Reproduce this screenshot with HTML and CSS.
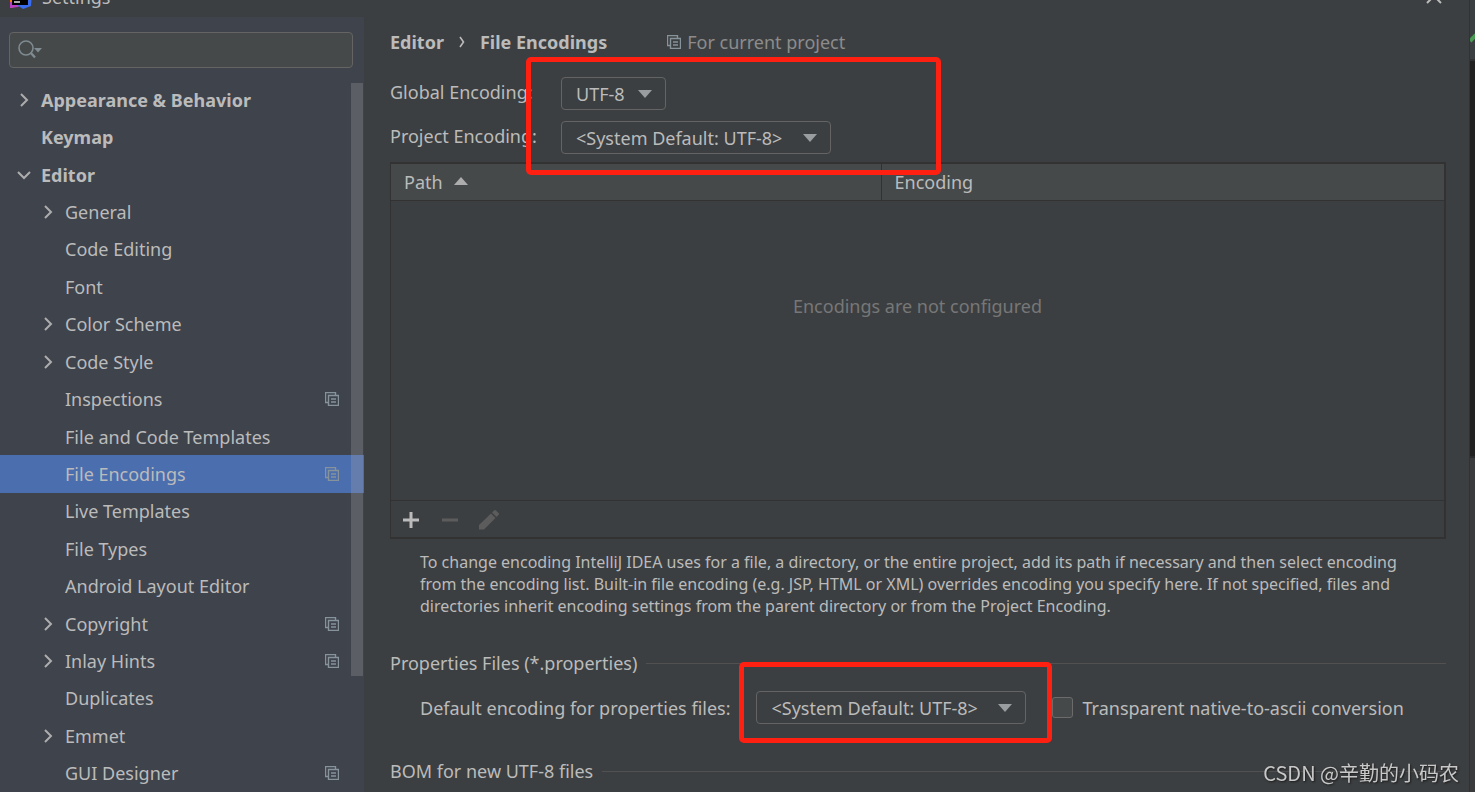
FILE: index.html
```html
<!DOCTYPE html>
<html lang="en">
<head>
    <meta charset="UTF-8">
    <meta name="viewport" content="width=device-width, initial-scale=1.0">
    <title>Settings</title>
    <link rel="stylesheet" href="styles.css">
</head>
<body>
    <!-- shared icons -->
    <svg class="sprite" aria-hidden="true">
        <symbol id="icon-right" viewBox="0 0 14 14"><path d="M4 1 L10 7 L4 13" fill="none" stroke="currentColor" stroke-width="2"/></symbol>
        <symbol id="icon-down" viewBox="0 0 14 14"><path d="M1 4 L7 10 L13 4" fill="none" stroke="currentColor" stroke-width="2"/></symbol>
        <symbol id="icon-copy" viewBox="0 0 14 14"><path d="M10.5 3 V0.5 H0.5 V10.5 H3" fill="none" stroke="currentColor" stroke-width="1.400"/><path d="M3.500 3.500 H13.500 V13.500 H3.500 Z M6 7 H11 M6 10 H11" fill="none" stroke="currentColor" stroke-width="1.400"/></symbol>
        <symbol id="icon-drop" viewBox="0 0 14 8"><path d="M0 0 H14 L7 8 Z" fill="currentColor"/></symbol>
    </svg>

    <div class="window">
        <header class="titlebar">
            <svg class="logo" width="24" height="24" viewBox="0 0 24 24" aria-hidden="true">
                <path d="M1 3 L9 14 L10 21 L1 23 Z" fill="#f97a12"/>
                <path d="M1 17 L14 18 L9 22 L1 23 Z" fill="#b83fc5"/>
                <path d="M12 1 L23 8 L22 21 L14 24 L8 20 Z" fill="#3a6cf0"/>
                <path d="M3 4 H19 V20 H3 Z" fill="#000"/>
                <path d="M5 16 H11 V18 H5 Z" fill="#aaa"/>
            </svg>
            <span>Settings</span>
            <button class="close" aria-label="Close">
                <svg width="16" height="16" viewBox="0 0 16 16"><path d="M1 1 L15 15 M15 1 L1 15" stroke="currentColor" stroke-width="2"/></svg>
            </button>
        </header>

        <aside class="sidebar">
            <div class="search">
                <svg width="26" height="20" viewBox="0 0 26 20" aria-hidden="true">
                    <circle cx="9" cy="8" r="7" fill="none" stroke="currentColor" stroke-width="1.6"/>
                    <path d="M13.500 12.500 L18 17.500" stroke="currentColor" stroke-width="2.400"/>
                    <path d="M17 8 H25 L21 12.500 Z" fill="currentColor"/>
                </svg>
                <input type="text" aria-label="Search settings">
            </div>
            <ul class="tree">
                <li class="top"><svg class="arrow"><use href="#icon-right"/></svg><a href="#">Appearance &amp; Behavior</a></li>
                <li class="top"><a href="#">Keymap</a></li>
                <li class="top"><svg class="arrow"><use href="#icon-down"/></svg><a href="#">Editor</a></li>
                <li><svg class="arrow"><use href="#icon-right"/></svg><a href="#">General</a></li>
                <li><a href="#">Code Editing</a></li>
                <li><a href="#">Font</a></li>
                <li><svg class="arrow"><use href="#icon-right"/></svg><a href="#">Color Scheme</a></li>
                <li><svg class="arrow"><use href="#icon-right"/></svg><a href="#">Code Style</a></li>
                <li><a href="#">Inspections</a><svg class="copy"><use href="#icon-copy"/></svg></li>
                <li><a href="#">File and Code Templates</a></li>
                <li class="selected"><a href="#">File Encodings</a><svg class="copy"><use href="#icon-copy"/></svg></li>
                <li><a href="#">Live Templates</a></li>
                <li><a href="#">File Types</a></li>
                <li><a href="#">Android Layout Editor</a></li>
                <li><svg class="arrow"><use href="#icon-right"/></svg><a href="#">Copyright</a><svg class="copy"><use href="#icon-copy"/></svg></li>
                <li><svg class="arrow"><use href="#icon-right"/></svg><a href="#">Inlay Hints</a><svg class="copy"><use href="#icon-copy"/></svg></li>
                <li><a href="#">Duplicates</a></li>
                <li><svg class="arrow"><use href="#icon-right"/></svg><a href="#">Emmet</a></li>
                <li><a href="#">GUI Designer</a><svg class="copy"><use href="#icon-copy"/></svg></li>
            </ul>
            <div class="scrollbar"></div>
        </aside>

        <main class="content">
            <div class="breadcrumb">
                <b>Editor</b>
                <svg width="6" height="12" viewBox="0 0 6 12" aria-hidden="true"><path d="M1 1 L4.500 6 L1 11" fill="none" stroke="currentColor" stroke-width="1.600"/></svg>
                <b>File Encodings</b>
                <span class="scope"><svg class="copy"><use href="#icon-copy"/></svg>For current project</span>
            </div>

            <div class="encodings">
                <label for="global">Global Encoding:</label>
                <span class="combo short">
                    <select id="global"><option>UTF-8</option></select>
                    <svg><use href="#icon-drop"/></svg>
                </span>
                <label for="project">Project Encoding:</label>
                <span class="combo">
                    <select id="project"><option>&lt;System Default: UTF-8&gt;</option></select>
                    <svg><use href="#icon-drop"/></svg>
                </span>
                <div class="mark mark-top"></div>
            </div>

            <div class="panel">
                <table>
                    <thead>
                        <tr>
                            <th class="path">Path <svg width="14" height="8" viewBox="0 0 14 8" aria-hidden="true"><path d="M0 8 H14 L7 0 Z" fill="currentColor"/></svg></th>
                            <th>Encoding</th>
                        </tr>
                    </thead>
                    <tbody>
                        <tr><td colspan="2">Encodings are not configured</td></tr>
                    </tbody>
                </table>
                <div class="toolbar">
                    <button aria-label="Add"><svg viewBox="0 0 20 20"><path d="M10 2 V18 M2 10 H18" stroke="currentColor" stroke-width="3"/></svg></button>
                    <button aria-label="Remove" disabled><svg viewBox="0 0 20 20"><path d="M2 10 H18" stroke="currentColor" stroke-width="3"/></svg></button>
                    <button aria-label="Edit" disabled><svg viewBox="0 0 20 20"><path d="M0 15 L12 3.500 L16.500 8 L5 19.500 H0 Z M13 2.500 L15 0.500 Q16 -0.500 17 0.500 L19.500 3 Q20.500 4 19.500 5 L17.500 7 Z" fill="currentColor"/></svg></button>
                </div>
            </div>

            <p class="hint">To change encoding IntelliJ IDEA uses for a file, a directory, or the entire project, add its path if necessary and then select encoding<br>
                from the encoding list. Built-in file encoding (e.g. JSP, HTML or XML) overrides encoding you specify here. If not specified, files and<br>
                directories inherit encoding settings from the parent directory or from the Project Encoding.</p>

            <h2>Properties Files (*.properties)</h2>
            <div class="properties">
                <label for="props">Default encoding for properties files:</label>
                <span class="combo">
                    <select id="props"><option>&lt;System Default: UTF-8&gt;</option></select>
                    <svg><use href="#icon-drop"/></svg>
                    <span class="mark mark-props"></span>
                </span>
                <input type="checkbox" id="ascii">
                <label for="ascii">Transparent native-to-ascii conversion</label>
            </div>
            <h2>BOM for new UTF-8 files</h2>
        </main>

        <!-- edge of the editor behind the dialog -->
        <div class="behind">
            <div class="behind-top"><svg width="6" height="12" viewBox="0 0 6 12" aria-hidden="true"><path d="M0 9 L6 3" stroke="#499c54" stroke-width="4"/></svg></div>
            <div class="behind-editor"></div>
            <div class="behind-bottom"></div>
        </div>
    </div>

    <div class="watermark">CSDN @辛勤的小码农</div>
</body>
</html>
```
FILE: styles.css
```css
* {
    box-sizing: border-box;
}
body {
    margin: 0;
    background-color: #3c3f41;
    color: #bbbbbb;
    font-family: "Noto Sans", "Noto Sans CJK SC", sans-serif;
    font-size: 18px;
    line-height: 24px;
    white-space: nowrap;
}
svg {
    flex: none;
    display: block;
}
.sprite {
    display: none;
}
.window {
    display: grid;
    grid-template-columns: 364px 1fr 6px;
    grid-template-rows: 17px 1fr;
    height: 100vh;
    overflow: hidden;
}

/* title bar */
.titlebar {
    grid-column: 1 / 3;
    display: flex;
    align-items: flex-end;
    gap: 9px;
    padding: 0 27px 8px 9px;
    overflow: hidden;
}
.close {
    margin-left: auto;
    padding: 0 0 5px;
    border: none;
    background: none;
    color: #bbbbbb;
}

/* sidebar */
.sidebar {
    position: relative;
    display: flex;
    flex-direction: column;
    min-height: 0;
    background-color: #3f434c;
}
.search {
    display: flex;
    align-items: center;
    height: 36px;
    margin: 15px 11px 13px 9px;
    padding-left: 7px;
    border: 1px solid #646464;
    border-radius: 4px;
    background-color: #45494a;
    color: #7f8b91;
}
.search input {
    flex: 1;
    min-width: 0;
    border: none;
    outline: none;
    background: none;
    color: #bbbbbb;
    font: inherit;
}
.tree {
    flex: 1;
    display: flex;
    flex-direction: column;
    margin: 0;
    padding: 0;
    list-style: none;
}
.tree li {
    flex: 1;
    display: flex;
    align-items: center;
    position: relative;
    padding: 0 25px 0 65px;
}
.tree .top {
    padding-left: 41px;
    font-weight: bold;
}
.tree a {
    color: inherit;
    text-decoration: none;
}
.tree .selected {
    background-color: #4b6eaf;
}
.arrow {
    width: 14px;
    height: 14px;
    margin: 0 10px 0 -24px;
    color: #adadad;
}
.copy {
    width: 14px;
    height: 14px;
    color: #87939a;
}
.tree .copy {
    margin-left: auto;
}
.scrollbar {
    position: absolute;
    top: 66px;
    right: 1px;
    width: 12px;
    height: 593px;
    background-color: rgba(166, 166, 166, 0.28);
}

/* right side */
.content {
    min-width: 0;
    padding: 13px 23px 0 26px;
}
.breadcrumb,
.scope {
    display: flex;
    align-items: center;
}
.breadcrumb {
    gap: 15px;
}
.scope {
    gap: 6px;
    margin-left: 45px;
    color: #8c8c8c;
}
.encodings {
    position: relative;
    display: grid;
    grid-template-columns: 171px max-content;
    row-gap: 11px;
    align-items: center;
    margin-top: 23px;
}
.encodings label {
    padding-bottom: 3px;
}
.combo {
    position: relative;
    width: 270px;
}
.short {
    width: 105px;
}
.combo select {
    appearance: none;
    display: block;
    width: 100%;
    height: 33px;
    padding: 0 14px;
    border: 1px solid #646464;
    border-radius: 4px;
    background-color: #3c3f41;
    color: #bbbbbb;
    font: inherit;
}
.combo svg {
    position: absolute;
    top: 13px;
    right: 14px;
    width: 14px;
    height: 8px;
    color: #9a9da0;
    pointer-events: none;
}
.mark {
    position: absolute;
    z-index: 1;
    border: 5px solid #ff2012;
    border-radius: 5px;
    pointer-events: none;
}
.mark-top {
    top: -20px;
    left: 136px;
    width: 415px;
    height: 118px;
}
.mark-props {
    top: -29px;
    left: -17px;
    width: 313px;
    height: 81px;
}

/* table */
.panel {
    margin-top: 8px;
    border: 2px solid #323232;
    border-left-width: 1px;
}
table {
    width: 100%;
    border-collapse: collapse;
}
th {
    height: 36px;
    padding: 1px 13px 0;
    border-bottom: 1px solid #323232;
    background-color: #45494a;
    font-weight: normal;
    text-align: left;
}
th.path {
    width: 490px;
    border-right: 1px solid #323232;
}
th svg {
    display: inline-block;
    margin: 0 0 4px 7px;
    color: #adadad;
}
td {
    height: 300px;
    padding: 0 0 88px;
    color: #777777;
    text-align: center;
}
.toolbar {
    display: flex;
    gap: 19px;
    padding: 9px 10px 7px;
    border-top: 1px solid #323232;
}
.toolbar button {
    width: 20px;
    padding: 0;
    border: none;
    background: none;
    color: #bbbbbb;
}
.toolbar button:disabled {
    color: #5c5c5c;
}
.hint {
    margin: 12px 0 34px 30px;
    font-size: 16px;
    line-height: 22px;
}

h2 {
    display: flex;
    align-items: center;
    gap: 9px;
    margin: 0;
    font-size: 18px;
    font-weight: normal;
}
h2::after {
    content: "";
    flex: 1;
    height: 1px;
    background-color: #515151;
}
.properties {
    display: flex;
    align-items: center;
    margin: 16px 0 35px 30px;
}
.properties .combo {
    margin: 0 26px;
}
input[type="checkbox"] {
    appearance: none;
    width: 21px;
    height: 21px;
    margin: 0 9px 0 0;
    border: 1px solid #6b6b6b;
    border-radius: 3px;
    background-color: #45494a;
}

.behind {
    grid-column: 3;
    grid-row: 1 / 3;
    display: flex;
    flex-direction: column;
    border-left: 1px solid #323232;
}
.behind-top {
    height: 61px;
    padding-top: 32px;
    border-bottom: 2px solid #323232;
}
.behind-editor {
    height: 395px;
    background-color: #212121;
}
.behind-bottom {
    flex: 1;
    border-top: 2px solid #2b2b2b;
    background-color: #393b3d;
}
.watermark {
    position: fixed;
    right: 16px;
    bottom: 7px;
    z-index: 2;
    color: #c8c8c8;
    font-family: "Noto Sans CJK SC", sans-serif;
    font-size: 20px;
    text-shadow: 1px 1px 2px #1a1a1a;
}
```
